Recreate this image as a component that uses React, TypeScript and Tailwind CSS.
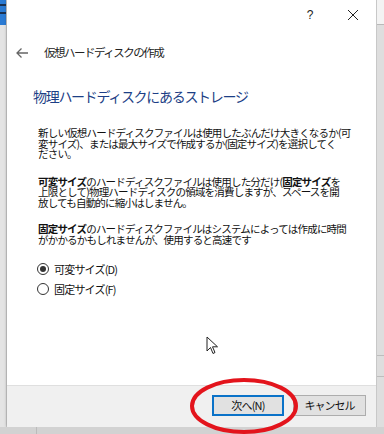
const jp = { fontFamily: '"Noto Sans CJK JP", "Noto Sans", sans-serif' };

function LeftStrip() {
  return (
    <div className="w-[7px] h-full flex flex-col bg-[#e4e4e4] border-r border-[#cfcfcf]">
      <div className="h-[25px] bg-[#2b7bd4] flex flex-col pt-[4px] gap-[6px]">
        <div className="h-[2px] bg-[#1b3150]" />
        <div className="h-[2px] bg-[#1b3150]" />
      </div>
      <div className="flex-1" />
    </div>
  );
}

function RightStrip() {
  return (
    <div className="w-[8px] h-full flex flex-col bg-[#dedede] border-l border-[#c8c8c8]">
      <div className="h-[25px] bg-[#f3f3f3] border-b border-[#b9b9b9]" />
      <div className="flex-1" />
      <div className="h-[1px] bg-[#bdbdbd] mb-[20px]" />
      <div className="h-[1px] bg-[#bdbdbd] mb-[20px]" />
      <div className="h-[30px]" />
    </div>
  );
}

function Radio({ checked, label }: { checked?: boolean; label: string }) {
  return (
    <div className="flex items-center gap-[5px] h-[20px]">
      <div className="w-[12px] h-[12px] rounded-full border border-[#333] bg-white flex items-center justify-center">
        {checked && <div className="w-[6px] h-[6px] rounded-full bg-[#333]" />}
      </div>
      <span className="text-[11px] text-[#111] tracking-[-0.8px]">{label}</span>
    </div>
  );
}

export default function App() {
  return (
    <div className="w-[384px] h-[434px] overflow-hidden relative flex flex-col bg-[#d6d6d6]" style={jp}>
      <div className="h-[427px] flex">
        <LeftStrip />
        <div className="w-[369px] h-full bg-white flex flex-col shadow-[0_0_3px_rgba(0,0,0,0.35)]">
          <div className="h-[30px] flex justify-end items-center text-[#222]">
            <div className="w-[40px] flex justify-center text-[12px]" style={{ fontFamily: '"Liberation Sans", sans-serif' }}>?</div>
            <div className="w-[46px] flex justify-center">
              <svg width="12" height="12" viewBox="0 0 12 12">
                <path d="M1 1 L11 11 M11 1 L1 11" stroke="#222" strokeWidth="1" />
              </svg>
            </div>
          </div>

          <div className="h-[16px] mt-[15px] flex items-center pl-[8px]">
            <svg width="14" height="12" viewBox="0 0 14 12">
              <path d="M13 6 H2 M6.5 1.5 L2 6 L6.5 10.5" stroke="#666" strokeWidth="1.3" fill="none" />
            </svg>
            <span className="ml-[15px] text-[11.5px] text-[#222] tracking-[-1.5px]">仮想ハードディスクの作成</span>
          </div>

          <div className="mt-[25px] pl-[26px] h-[20px] flex items-center text-[14px] text-[#1d3f86] tracking-[-1.3px]">
            物理ハードディスクにあるストレージ
          </div>

          <div className="mt-[22px] pl-[31px] text-[10.5px] leading-[10.5px] text-[#111] tracking-[-0.8px] whitespace-nowrap">
            <p>
              新しい仮想ハードディスクファイルは使用したぶんだけ大きくなるか(可
              <br />
              変サイズ)、または最大サイズで作成するか(固定サイズ)を選択してく
              <br />
              ださい。
            </p>
            <p className="mt-[17px]">
              <b>可変サイズ</b>のハードディスクファイルは使用した分だけ(<b>固定サイズ</b>を
              <br />
              上限として)物理ハードディスクの領域を消費しますが、スペースを開
              <br />
              放しても自動的に縮小はしません。
            </p>
            <p className="mt-[16px]">
              <b>固定サイズ</b>のハードディスクファイルはシステムによっては作成に時間
              <br />
              がかかるかもしれませんが、使用すると高速です
            </p>
          </div>

          <div className="mt-[14px] pl-[30px] flex flex-col">
            <Radio checked label="可変サイズ(D)" />
            <Radio label="固定サイズ(F)" />
          </div>

          <div className="flex-1" />

          <div className="h-[42px] bg-[#f0f0f0] border-t border-[#dfdfdf] flex justify-end items-start pt-[9px] pr-[10px] gap-[9px]">
            <button className="w-[72px] h-[21px] bg-[#e1e1e1] border-2 border-[#0a72c8] text-[11px] text-[#111] tracking-[-0.8px] flex items-center justify-center">
              次へ(N)
            </button>
            <button className="w-[73px] h-[21px] bg-[#e1e1e1] border border-[#adadad] text-[11px] text-[#111] tracking-[-1px] flex items-center justify-center">
              キャンセル
            </button>
          </div>
        </div>
        <RightStrip />
      </div>
      <div className="flex-1 bg-[#d2d2d2] flex">
        <div className="w-[37px] border-r border-[#bbb]" />
      </div>

      <svg className="absolute left-[206px] top-[336px]" width="14" height="20" viewBox="0 0 14 20">
        <path d="M1 1 L1 15 L4.5 11.5 L7 17.5 L9 16.5 L6.5 10.8 L11.5 10.8 Z" fill="white" stroke="#222" strokeWidth="1" strokeLinejoin="round" />
      </svg>

      <svg className="absolute left-[188px] top-[377px]" width="114" height="58" viewBox="0 0 114 58">
        <ellipse cx="56" cy="29" rx="52" ry="26" fill="none" stroke="#e3141c" strokeWidth="4" />
      </svg>
    </div>
  );
}
